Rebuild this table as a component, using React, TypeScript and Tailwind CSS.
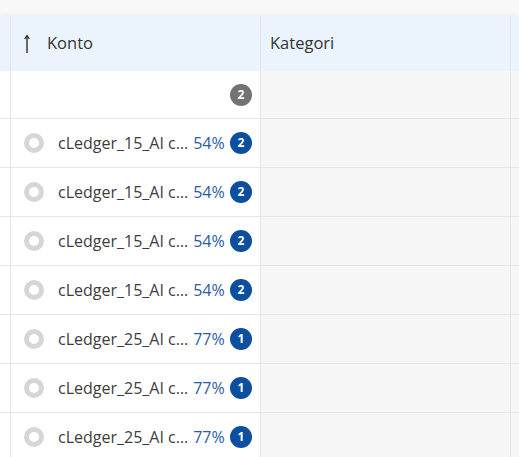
import React from "react";

const rows = [
  { name: "cLedger_15_AI c…", pct: "54%", n: 2 },
  { name: "cLedger_15_AI c…", pct: "54%", n: 2 },
  { name: "cLedger_15_AI c…", pct: "54%", n: 2 },
  { name: "cLedger_15_AI c…", pct: "54%", n: 2 },
  { name: "cLedger_25_AI c…", pct: "77%", n: 1 },
  { name: "cLedger_25_AI c…", pct: "77%", n: 1 },
  { name: "cLedger_25_AI c…", pct: "77%", n: 1 },
];

function Ring() {
  return (
    <svg width="20" height="20" viewBox="0 0 20 20" className="shrink-0">
      <circle cx="10" cy="10" r="7.5" fill="none" stroke="#d6d6d6" strokeWidth="5" />
    </svg>
  );
}

function Badge({ n, gray }: { n: number; gray?: boolean }) {
  return (
    <span
      className={
        "flex h-[22px] w-[22px] shrink-0 items-center justify-center rounded-full text-[12px] font-bold text-white " +
        (gray ? "bg-[#737373]" : "bg-[#0b4f9e]")
      }
    >
      {n}
    </span>
  );
}

export default function App() {
  return (
    <div
      className="h-[457px] w-[519px] overflow-hidden bg-[#f7f7f7] text-[#333]"
      style={{ fontFamily: '"Open Sans", "Noto Sans", sans-serif' }}
    >
      <div className="h-4 bg-[#f8f8f8]" />
      <div className="grid grid-cols-[11px_250px_250px_1fr] shadow-[0_-2px_3px_rgba(0,0,0,0.04)]">
        {/* header */}
        <div className="h-[55px] border-r border-[#e3e7eb] bg-[#ebf4fc]" />
        <div className="flex h-[55px] items-center border-r border-[#e3e7eb] bg-[#ebf4fc] pl-[13px]">
          <svg width="6" height="20" viewBox="0 0 6 20" className="mr-[17px]">
            <path d="M3 2 L3 19" stroke="#3a2a22" strokeWidth="1.4" />
            <path d="M0.6 5 L3 1.6 L5.4 5" fill="none" stroke="#3a2a22" strokeWidth="1.3" />
          </svg>
          <span className="text-[16.5px] font-medium">Konto</span>
        </div>
        <div className="flex h-[55px] items-center border-r border-[#e3e7eb] bg-[#ebf4fc] pl-[9px]">
          <span className="text-[16.5px] font-medium">Kategori</span>
        </div>
        <div className="h-[55px] bg-[#ebf4fc]" />

        {/* group row */}
        <div className="h-[48px] border-r border-b border-[#e6e6e6] bg-white" />
        <div className="flex h-[48px] items-center justify-end border-r border-b border-[#e6e6e6] bg-white pr-[8px]">
          <Badge n={2} gray />
        </div>
        <div className="h-[48px] border-r border-b border-[#e6e6e6] bg-[#f6f6f6]" />
        <div className="h-[48px] border-b border-[#e6e6e6] bg-[#f6f6f6]" />

        {rows.map((r, i) => (
          <React.Fragment key={i}>
            <div className="h-[49px] border-r border-b border-[#e6e6e6] bg-white" />
            <div className="flex h-[49px] items-center border-r border-b border-[#e6e6e6] bg-white pl-[13px] pr-[8px]">
              <Ring />
              <span className="ml-[14px] whitespace-nowrap text-[16px] text-[#3d3d3d]">{r.name}</span>
              <span className="ml-[5px] text-[16px] text-[#2a5da6]">{r.pct}</span>
              <span className="ml-auto">
                <Badge n={r.n} />
              </span>
            </div>
            <div className="h-[49px] border-r border-b border-[#e6e6e6] bg-[#f6f6f6]" />
            <div className="h-[49px] border-b border-[#e6e6e6] bg-[#f6f6f6]" />
          </React.Fragment>
        ))}
      </div>
    </div>
  );
}
